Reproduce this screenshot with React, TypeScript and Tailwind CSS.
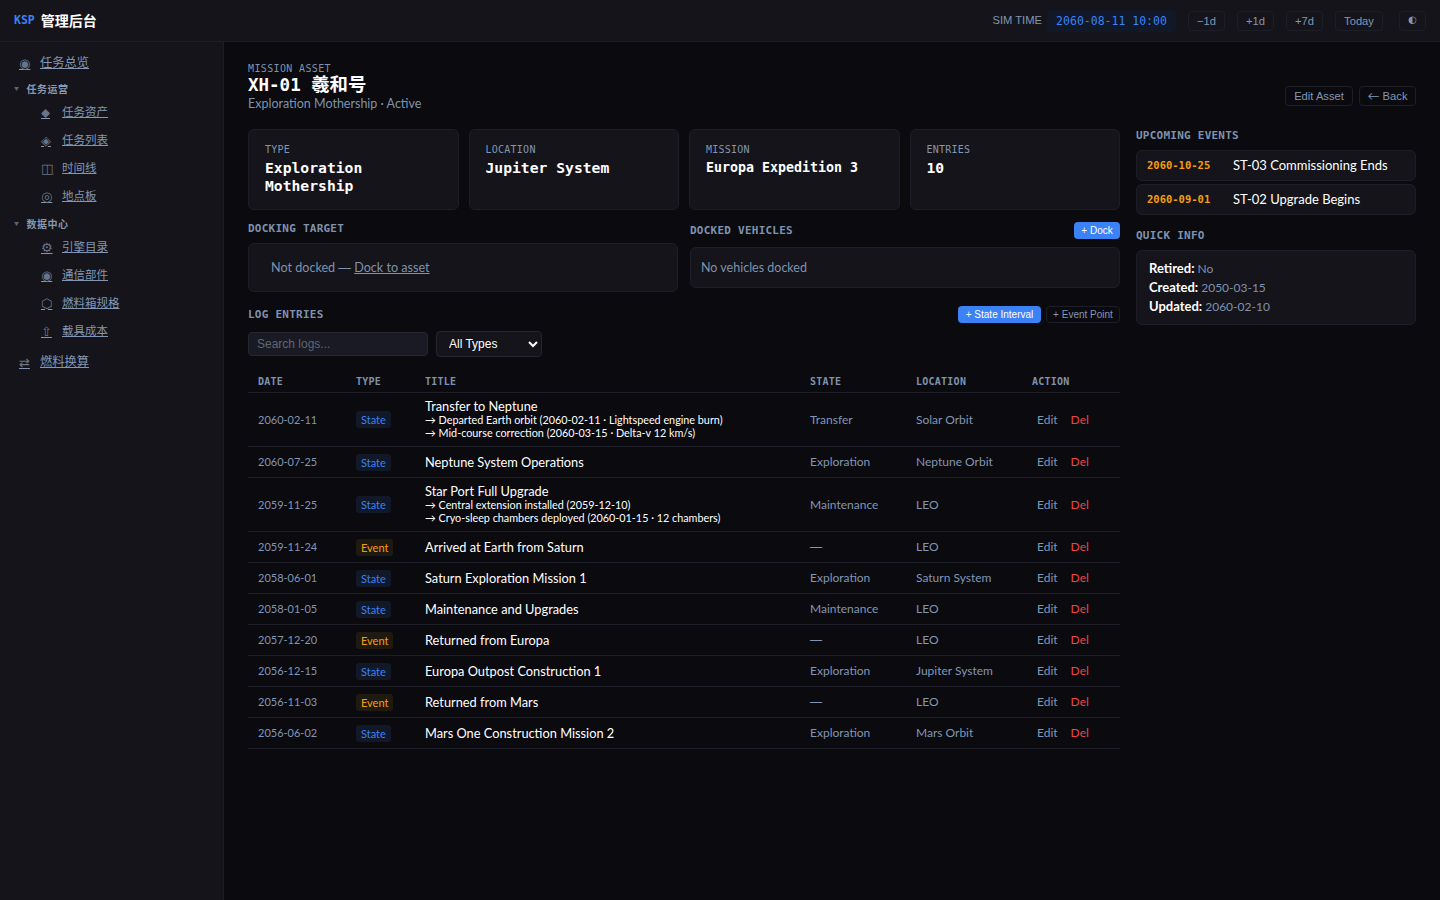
const sans = "font-['Lato','Noto_Sans_CJK_SC',sans-serif]";
const mono = "font-['DejaVu_Sans_Mono','Noto_Sans_CJK_SC',monospace]";
const arial = "font-['Liberation_Sans',sans-serif]";

const NavLink = ({ icon, label, sub }: { icon: string; label: string; sub?: boolean }) => (
  <a
    href="#"
    className={`flex h-7 items-center gap-[9px] text-[#8296b3] underline ${sub ? "pl-[41px] text-[11.5px]" : "pl-[19px] text-[12.25px]"}`}
  >
    <span className="w-3 whitespace-nowrap font-['DejaVu_Sans',sans-serif] text-[13px] leading-none text-[#6a7488]">{icon}</span>
    <span>{label}</span>
  </a>
);

const NavGroup = ({ label, className }: { label: string; className: string }) => (
  <div className={`flex h-[18px] items-center gap-[7px] pl-[14px] text-[10px] font-bold tracking-[0.5px] text-[#8a98ae] ${className}`}>
    <span className="text-[5px] text-[#5a6478]">▼</span>
    <span>{label}</span>
  </div>
);

const Sidebar = () => (
  <aside className={`w-[224px] shrink-0 border-r border-[#1e1e28] bg-[#14141a] pt-[7px] ${sans}`}>
    <NavLink icon="◉" label="任务总览" />
    <NavGroup className="mt-[3px]" label="任务运营" />
    <NavLink sub icon="⬥" label="任务资产" />
    <NavLink sub icon="◈" label="任务列表" />
    <NavLink sub icon="◫" label="时间线" />
    <NavLink sub icon="◎" label="地点板" />
    <NavGroup className="mt-[5px]" label="数据中心" />
    <NavLink sub icon="⚙" label="引擎目录" />
    <NavLink sub icon="◉" label="通信部件" />
    <NavLink sub icon="⬡" label="燃料箱规格" />
    <NavLink sub icon="⇧" label="载具成本" />
    <div className="mt-[3px]">
      <NavLink icon="⇄" label="燃料换算" />
    </div>
  </aside>
);

const Btn = ({ children, className }: { children: React.ReactNode; className: string }) => (
  <button className={`h-[20px] rounded-[4px] border border-[#1e1e28] text-[11.2px] text-[#8296b3] ${arial} ${className}`}>
    {children}
  </button>
);

const Header = () => (
  <header className="flex h-[42px] items-center justify-between border-b border-[#1e1e28] bg-[#14141a] px-[14px]">
    <div className="flex items-center gap-[6px]">
      <span className={`mt-[1px] text-[11.5px] font-bold text-[#3b82f6] ${mono}`}>KSP</span>
      <span className={`text-[14px] font-bold text-white ${sans}`}>管理后台</span>
    </div>
    <div className="flex items-center">
      <span className={`text-[11.2px] text-[#8296b3] ${arial}`}>SIM TIME</span>
      <span className={`ml-[5px] h-[22px] w-[129px] rounded-[4px] bg-[#111827] text-center text-[11.5px] leading-[22px] text-[#3b82f6] ${mono}`}>
        2060-08-11 10:00
      </span>
      <div className="ml-[12px] mt-[1px] flex gap-[12px]">
        <Btn className="w-[37px]">−1d</Btn>
        <Btn className="w-[37px]">+1d</Btn>
        <Btn className="w-[37px]">+7d</Btn>
        <Btn className="w-[48px]">Today</Btn>
      </div>
      <button className="ml-[16px] mt-[1px] h-[20px] w-[27px] rounded-[4px] border border-[#1e1e28] pb-[3px] font-['DejaVu_Sans',sans-serif] text-[10px] leading-none text-[#8296b3]">
        ◐
      </button>
    </div>
  </header>
);

const Stat = ({ label, value, size }: { label: string; value: string; size: string }) => (
  <div className="h-[81px] rounded-[6px] border border-[#1e1e28] bg-[#14141a] px-4 pt-[13px]">
    <div className={`text-[10px] leading-[13px] tracking-[0.25px] text-[#8296b3] ${mono}`}>{label}</div>
    <div className={`mt-[3px] font-bold leading-[18px] text-white ${mono} ${size}`}>{value}</div>
  </div>
);

const SectionTitle = ({ children }: { children: React.ReactNode }) => (
  <div className={`pt-[1px] text-[11px] font-bold leading-[16px] tracking-[0.24px] text-[#7f92ad] ${mono}`}>{children}</div>
);

type Row = {
  date: string;
  type: "State" | "Event";
  title: string;
  subs?: string[];
  state: string;
  location: string;
};

const rows: Row[] = [
  {
    date: "2060-02-11",
    type: "State",
    title: "Transfer to Neptune",
    subs: ["Departed Earth orbit (2060-02-11 · Lightspeed engine burn)", "Mid-course correction (2060-03-15 · Delta-v 12 km/s)"],
    state: "Transfer",
    location: "Solar Orbit",
  },
  { date: "2060-07-25", type: "State", title: "Neptune System Operations", state: "Exploration", location: "Neptune Orbit" },
  {
    date: "2059-11-25",
    type: "State",
    title: "Star Port Full Upgrade",
    subs: ["Central extension installed (2059-12-10)", "Cryo-sleep chambers deployed (2060-01-15 · 12 chambers)"],
    state: "Maintenance",
    location: "LEO",
  },
  { date: "2059-11-24", type: "Event", title: "Arrived at Earth from Saturn", state: "—", location: "LEO" },
  { date: "2058-06-01", type: "State", title: "Saturn Exploration Mission 1", state: "Exploration", location: "Saturn System" },
  { date: "2058-01-05", type: "State", title: "Maintenance and Upgrades", state: "Maintenance", location: "LEO" },
  { date: "2057-12-20", type: "Event", title: "Returned from Europa", state: "—", location: "LEO" },
  { date: "2056-12-15", type: "State", title: "Europa Outpost Construction 1", state: "Exploration", location: "Jupiter System" },
  { date: "2056-11-03", type: "Event", title: "Returned from Mars", state: "—", location: "LEO" },
  { date: "2056-06-02", type: "State", title: "Mars One Construction Mission 2", state: "Exploration", location: "Mars Orbit" },
];

const LogTable = () => (
  <table className={`mt-[9px] w-full table-fixed border-collapse ${sans}`}>
    <thead>
      <tr className={`h-[26px] border-b border-[#1e1e28] text-left text-[10px] tracking-[0.25px] text-[#7f92ad] ${mono}`}>
        <th className="w-[98px] px-[10px] pt-[6px] font-bold">DATE</th>
        <th className="w-[69px] px-[10px] pt-[6px] font-bold">TYPE</th>
        <th className="w-[385px] px-[10px] pt-[6px] font-bold">TITLE</th>
        <th className="w-[106px] px-[10px] pt-[6px] font-bold">STATE</th>
        <th className="w-[116px] px-[10px] pt-[6px] font-bold">LOCATION</th>
        <th className="w-[98px] px-[10px] pt-[6px] font-bold">ACTION</th>
      </tr>
    </thead>
    <tbody>
      {rows.map((r) => {
        const cell = r.subs ? "px-[10px] pt-[1px]" : "px-[10px]";
        return (
          <tr key={r.date} className={`border-b border-[#1e1e28] text-[12px] text-[#8296b3] ${r.subs ? "h-[54px]" : "h-[31px]"}`}>
            <td className={`px-[10px] text-[11px] ${r.subs ? "pt-[3px]" : "pt-[2px]"}`}>{r.date}</td>
            <td className={cell}>
              <span
                className={`inline-block h-[17px] rounded-[3px] px-[5px] text-[11px] leading-[17px] ${r.subs ? "" : "translate-y-[1px]"} ${
                  r.type === "State" ? "bg-[#111827] text-[#3b82f6]" : "bg-[#1f1a10] text-[#f59e0b]"
                }`}
              >
                {r.type}
              </span>
            </td>
            <td className="px-[10px] text-white">
              <div className="text-[12.8px] leading-[14px]">{r.title}</div>
              {r.subs?.map((s) => (
                <div key={s} className="text-[10.8px] leading-[13px]">
                  → {s}
                </div>
              ))}
            </td>
            <td className={cell}>{r.state === "—" ? <span className={arial}>—</span> : r.state}</td>
            <td className={cell}>{r.location}</td>
            <td className={cell}>
              <span className="ml-[5px]">Edit</span>
              <span className="ml-[13px] text-[#ef4444]">Del</span>
            </td>
          </tr>
        );
      })}
    </tbody>
  </table>
);

export default function App() {
  return (
    <div className={`flex min-h-[900px] flex-col bg-[#0a0a0f] ${sans}`}>
      <Header />
      <div className="flex flex-1">
        <Sidebar />
        <main className="flex-1 px-6 pt-5">
          <div className="flex items-end justify-between">
            <div>
              <div className={`text-[10px] leading-[13px] tracking-[0.36px] text-[#7f92ad] ${mono}`}>MISSION ASSET</div>
              <h1 className={`h-[21px] text-[17.5px] font-bold leading-[21px] text-white ${mono}`}>
                XH-01 <span className="text-[18.4px] leading-none">羲和号</span>
              </h1>
              <div className="text-[12.5px] leading-[15px] text-[#7f92ad]">Exploration Mothership · Active</div>
            </div>
            <div className="mb-[5px] flex gap-[6px]">
              <Btn className="w-[68px]">Edit Asset</Btn>
              <Btn className="w-[57px]">
                <span className={`text-[12px] ${sans}`}>←</span> Back
              </Btn>
            </div>
          </div>

          <div className="mt-[18px] flex gap-4">
            <div className="w-[872px]">
              <div className="grid grid-cols-4 gap-[10px]">
                <Stat label="TYPE" value="Exploration Mothership" size="text-[14.7px]" />
                <Stat label="LOCATION" value="Jupiter System" size="text-[14.7px]" />
                <Stat label="MISSION" value="Europa Expedition 3" size="text-[13.3px]" />
                <Stat label="ENTRIES" value="10" size="text-[14.7px]" />
              </div>

              <div className="mt-[8px] grid grid-cols-2 gap-3">
                <div>
                  <div className="flex h-[21px] items-center">
                    <SectionTitle>DOCKING TARGET</SectionTitle>
                  </div>
                  <div className="mt-[4px] flex h-[49px] items-center rounded-[6px] border border-[#1e1e28] bg-[#14141a] px-[22px] pt-[1px] text-[12.6px] text-[#7f92ad]">
                    <span>
                      Not docked <span className={arial}>—</span> <a href="#" className="underline">Dock to asset</a>
                    </span>
                  </div>
                </div>
                <div>
                  <div className="mt-[4px] flex h-[17px] items-center justify-between">
                    <SectionTitle>DOCKED VEHICLES</SectionTitle>
                    <button className={`h-[17px] w-[46px] rounded-[4px] bg-[#3b82f6] text-[10px] text-white ${arial}`}>+ Dock</button>
                  </div>
                  <div className="mt-[8px] flex h-[41px] items-center rounded-[6px] border border-[#1e1e28] bg-[#14141a] px-[10px] pt-[1px] text-[12.5px] text-[#7f92ad]">
                    No vehicles docked
                  </div>
                </div>
              </div>

              <div className="mt-[13px] flex h-[18px] items-center justify-between">
                <SectionTitle>LOG ENTRIES</SectionTitle>
                <div className="flex gap-[5px]">
                  <button className={`h-[17px] w-[83px] rounded-[4px] bg-[#3b82f6] text-[10px] text-white ${arial}`}>+ State Interval</button>
                  <button className={`h-[17px] w-[74px] rounded-[4px] border border-[#1e1e28] text-[10px] text-[#8296b3] ${arial}`}>+ Event Point</button>
                </div>
              </div>

              <div className="mt-[8px] flex items-center gap-2">
                <input
                  placeholder="Search logs..."
                  className={`h-[24px] w-[180px] rounded-[4px] border border-[#262630] bg-[#1a1a24] px-2 text-[12px] outline-none placeholder:text-[#5f6673] ${arial}`}
                />
                <select className={`h-[26px] w-[106px] rounded-[4px] border border-[#262630] bg-[#14141a] pl-[8px] text-[12px] text-white ${arial}`}>
                  <option>All Types</option>
                </select>
              </div>

              <LogTable />
            </div>

            <div className="w-[280px]">
              <div className="mt-[-2px]">
                <SectionTitle>UPCOMING EVENTS</SectionTitle>
              </div>
              <div className="mt-[6px] flex flex-col gap-[3px]">
                {[
                  ["2060-10-25", "ST-03 Commissioning Ends"],
                  ["2060-09-01", "ST-02 Upgrade Begins"],
                ].map(([d, t]) => (
                  <div key={d} className="flex h-[31px] items-center rounded-[6px] border border-[#1e1e28] bg-[#14141a] px-[10px]">
                    <span className={`w-[86px] text-[10.5px] font-bold text-[#f59e0b] ${mono}`}>{d}</span>
                    <span className="text-[13px] text-white">{t}</span>
                  </div>
                ))}
              </div>
              <div className="mt-[12px]">
                <SectionTitle>QUICK INFO</SectionTitle>
              </div>
              <div className="mt-[6px] rounded-[6px] border border-[#1e1e28] bg-[#14141a] px-3 py-2 text-[12px] leading-[19px] text-[#7f92ad]">
                <div><b className="text-[13px] text-white">Retired:</b> No</div>
                <div><b className="text-[13px] text-white">Created:</b> 2050-03-15</div>
                <div><b className="text-[13px] text-white">Updated:</b> 2060-02-10</div>
              </div>
            </div>
          </div>
        </main>
      </div>
    </div>
  );
}
